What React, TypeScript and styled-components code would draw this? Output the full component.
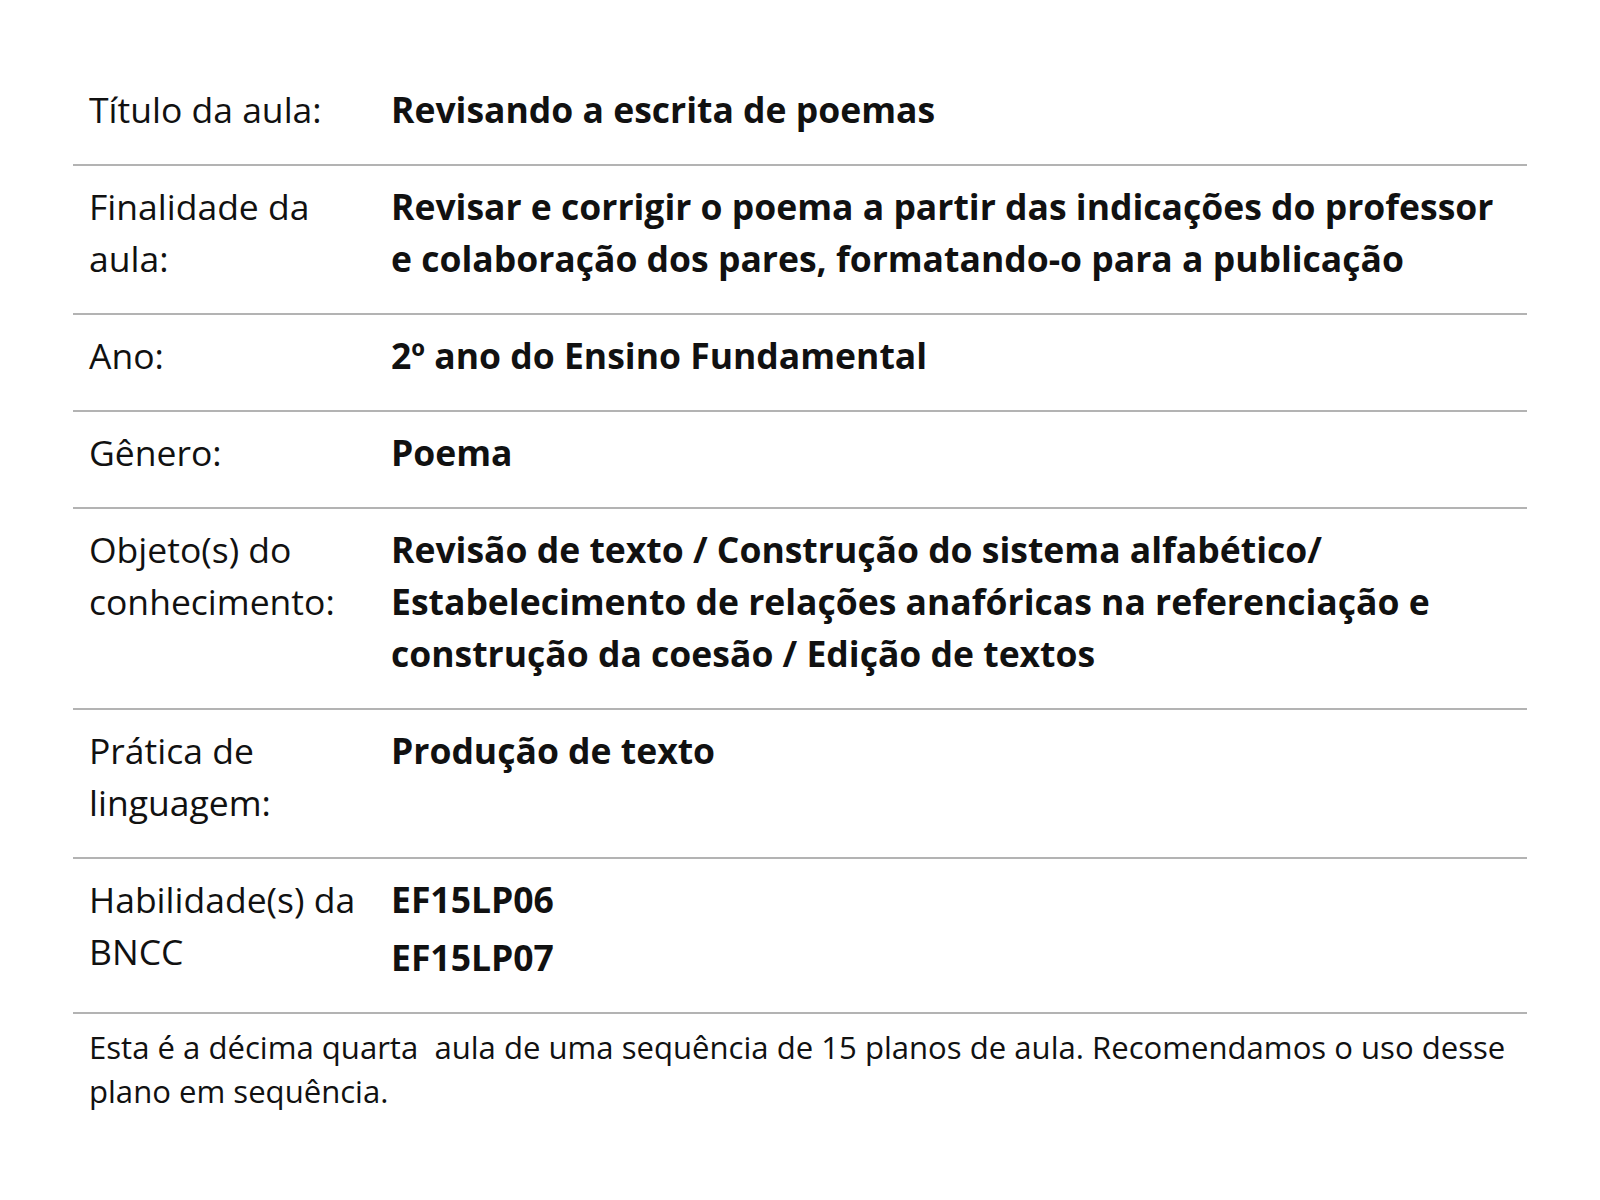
import React from 'react';
import styled, { createGlobalStyle } from 'styled-components';

const GlobalStyle = createGlobalStyle`
  html, body {
    margin: 0;
    padding: 0;
    background: #fff;
  }
  body {
    font-family: "Open Sans", "Noto Sans", sans-serif;
    color: #111;
  }
`;

const Page = styled.div`
  width: 1454px;
  padding: 69px 73px 0;
`;

const Row = styled.div`
  display: grid;
  grid-template-columns: 318px 1fr;
  border-bottom: 2px solid #b3b3b3;
  padding: 14px 0 29px;
  font-size: 35.5px;
  line-height: 52px;
`;

const Label = styled.div`
  padding: 0 16px;
  font-weight: 400;
`;

const Value = styled.div`
  padding-right: 16px;
  font-weight: 700;
`;

const Code = styled.div<{ $gap?: number }>`
  margin-top: ${(p) => p.$gap ?? 0}px;
`;

const Note = styled.p`
  margin: 0;
  padding: 11px 16px 0;
  font-size: 31.1px;
  line-height: 44px;
`;

const rows: { label: string; value: React.ReactNode }[] = [
  { label: 'Título da aula:', value: 'Revisando a escrita de poemas' },
  {
    label: 'Finalidade da aula:',
    value:
      'Revisar e corrigir o poema a partir das indicações do professor e colaboração dos pares, formatando-o para a publicação',
  },
  { label: 'Ano:', value: '2º ano do Ensino Fundamental' },
  { label: 'Gênero:', value: 'Poema' },
  {
    label: 'Objeto(s) do conhecimento:',
    value:
      'Revisão de texto / Construção do sistema alfabético/ Estabelecimento de relações anafóricas na referenciação e construção da coesão / Edição de textos',
  },
  { label: 'Prática de linguagem:', value: 'Produção de texto' },
  {
    label: 'Habilidade(s) da BNCC',
    value: (
      <>
        <Code>EF15LP06</Code>
        <Code $gap={6}>EF15LP07</Code>
      </>
    ),
  },
];

const App: React.FC = () => (
  <>
    <GlobalStyle />
    <Page>
      {rows.map((r) => (
        <Row key={r.label}>
          <Label>{r.label}</Label>
          <Value>{r.value}</Value>
        </Row>
      ))}
      <Note>
        Esta é a décima quarta&nbsp; aula de uma sequência de 15 planos de aula. Recomendamos o uso desse
        plano em sequência.
      </Note>
    </Page>
  </>
);

export default App;
